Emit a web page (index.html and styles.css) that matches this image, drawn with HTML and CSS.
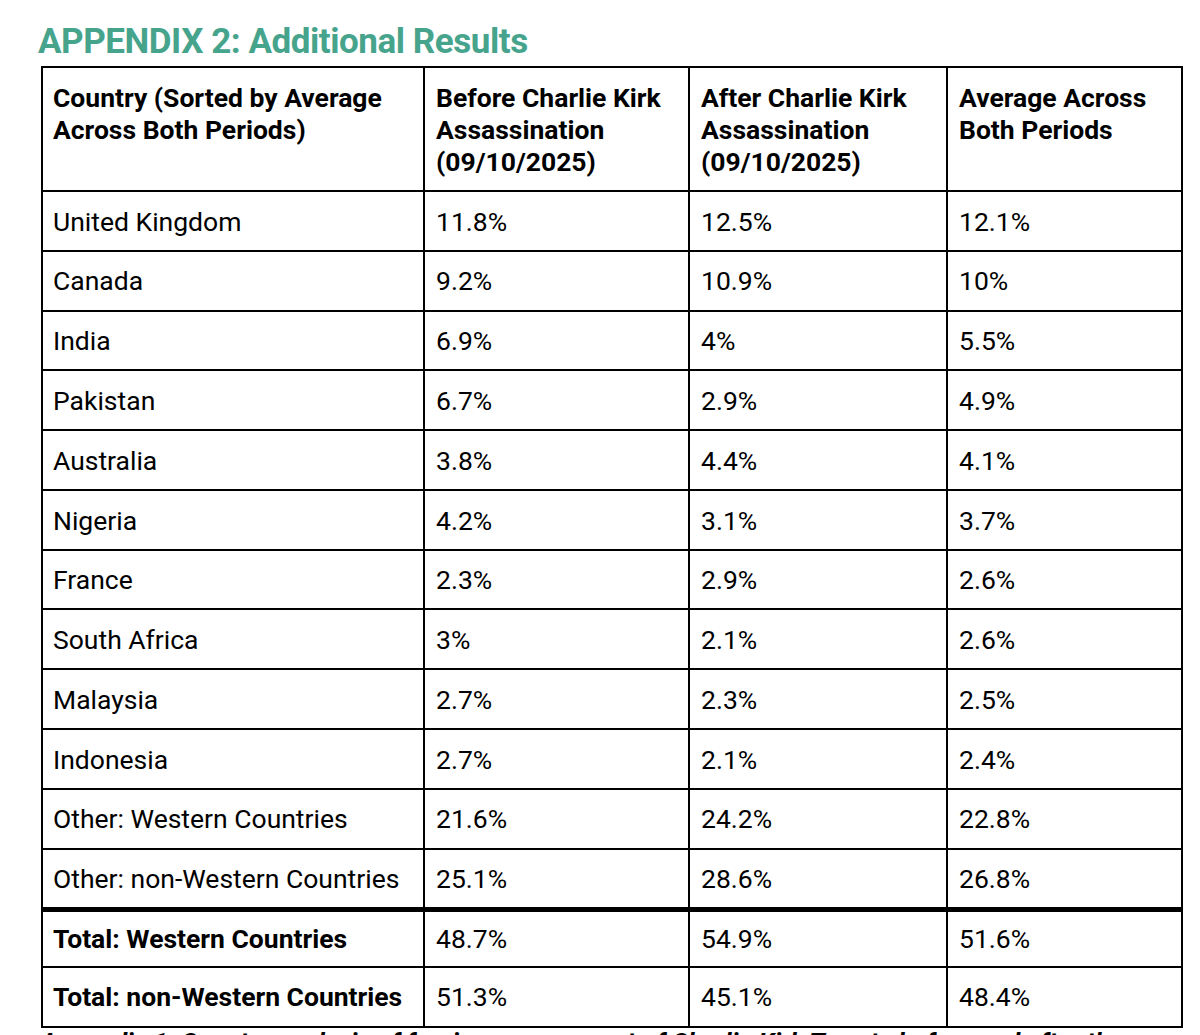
FILE: index.html
```html
<!DOCTYPE html>
<html lang="en">
<head>
<meta charset="utf-8">
<title>Appendix 2</title>
<link rel="stylesheet" href="styles.css">
</head>
<body>
<div class="page">
  <h1 class="title">APPENDIX 2: Additional Results</h1>
  <table class="results">
    <colgroup>
      <col class="c1"><col class="c2"><col class="c3"><col class="c4">
    </colgroup>
    <thead>
      <tr>
        <th>Country (Sorted by Average Across Both Periods)</th>
        <th>Before Charlie Kirk Assassination (09/10/2025)</th>
        <th>After Charlie Kirk Assassination (09/10/2025)</th>
        <th>Average Across Both Periods</th>
      </tr>
    </thead>
    <tbody>
      <tr><td>United Kingdom</td><td>11.8%</td><td>12.5%</td><td>12.1%</td></tr>
      <tr><td>Canada</td><td>9.2%</td><td>10.9%</td><td>10%</td></tr>
      <tr><td>India</td><td>6.9%</td><td>4%</td><td>5.5%</td></tr>
      <tr><td>Pakistan</td><td>6.7%</td><td>2.9%</td><td>4.9%</td></tr>
      <tr><td>Australia</td><td>3.8%</td><td>4.4%</td><td>4.1%</td></tr>
      <tr><td>Nigeria</td><td>4.2%</td><td>3.1%</td><td>3.7%</td></tr>
      <tr><td>France</td><td>2.3%</td><td>2.9%</td><td>2.6%</td></tr>
      <tr><td>South Africa</td><td>3%</td><td>2.1%</td><td>2.6%</td></tr>
      <tr><td>Malaysia</td><td>2.7%</td><td>2.3%</td><td>2.5%</td></tr>
      <tr><td>Indonesia</td><td>2.7%</td><td>2.1%</td><td>2.4%</td></tr>
      <tr><td>Other: Western Countries</td><td>21.6%</td><td>24.2%</td><td>22.8%</td></tr>
      <tr><td>Other: non-Western Countries</td><td>25.1%</td><td>28.6%</td><td>26.8%</td></tr>
      <tr class="total first-total"><td class="label">Total: Western Countries</td><td>48.7%</td><td>54.9%</td><td>51.6%</td></tr>
      <tr class="total last-total"><td class="label">Total: non-Western Countries</td><td>51.3%</td><td>45.1%</td><td>48.4%</td></tr>
    </tbody>
  </table>
  <p class="caption">Appendix 1: Country analysis of foreign engagement of Charlie Kirk Tweets before and after the assassination</p>
</div>
</body>
</html>
```

FILE: styles.css
```css
html, body {
  margin: 0;
  padding: 0;
  background: #ffffff;
}

body {
  font-family: Roboto, "Liberation Sans", sans-serif;
  color: #000000;
}

.page {
  padding: 22px 0 0 38px;
  overflow: hidden;
}

.title {
  margin: 0 0 4px 0;
  font-size: 35px;
  line-height: 40px;
  font-weight: 700;
  color: #47a48c;
  letter-spacing: -0.45px;
}

.results {
  border-collapse: collapse;
  margin-left: 3px;
  width: 1140px;
  table-layout: fixed;
  font-size: 26.5px;
  line-height: 32px;
}

.c1 { width: 382px; }
.c2 { width: 265px; }
.c3 { width: 258px; }
.c4 { width: 235px; }

.results th,
.results td {
  border: 2px solid #000;
  padding: 13.6px 10px 12.2px 10px;
  text-align: left;
  vertical-align: top;
}

.results td + td,
.results th + th {
  padding-left: 11px;
}

.results th {
  font-weight: 700;
  padding-top: 14px;
  padding-bottom: 12px;
}

.results td {
  font-weight: 400;
}

.results .first-total td {
  border-top: 5px solid #000;
  padding-top: 11px;
  padding-bottom: 10.5px;
}

.results .last-total td {
  padding-top: 13.5px;
  padding-bottom: 12.5px;
}

.results .label {
  font-weight: 700;
}

.caption {
  margin: 1px 0 0 2px;
  font-size: 26px;
  line-height: 26px;
  font-weight: 700;
  font-style: italic;
  white-space: nowrap;
}
```
